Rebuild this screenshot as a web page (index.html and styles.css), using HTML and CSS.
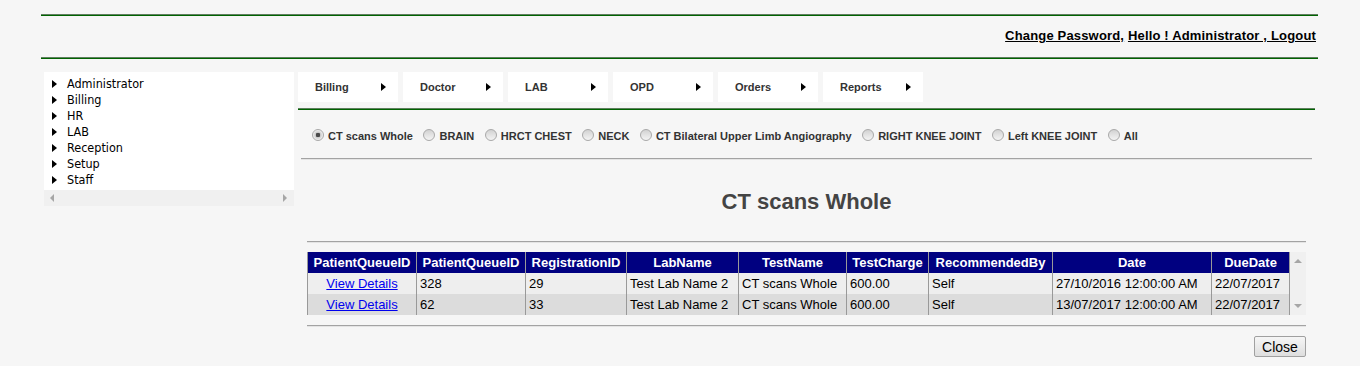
FILE: index.html
```html
<!DOCTYPE html>
<html lang="en">
<head>
  <meta charset="UTF-8" />
  <title>Lab Queue</title>
  <link rel="stylesheet" href="styles.css">
</head>
<body>
  <div class="page">
    <div class="rule green"></div>
    <div class="userbar">
      <a href="#">Change Password,</a> <a href="#">Hello ! Administrator , Logout</a>
    </div>
    <div class="rule green"></div>

    <div class="main">
      <div class="sidemenu">
        <ul class="tree">
          <li><span class="tri"></span>Administrator</li>
          <li><span class="tri"></span>Billing</li>
          <li><span class="tri"></span>HR</li>
          <li><span class="tri"></span>LAB</li>
          <li><span class="tri"></span>Reception</li>
          <li><span class="tri"></span>Setup</li>
          <li><span class="tri"></span>Staff</li>
        </ul>
        <div class="hscroll">
          <span class="arr-left"></span>
          <span class="arr-right"></span>
        </div>
      </div>

      <div class="content">
        <div class="navbar">
          <a href="#" class="tab">Billing<span class="tri"></span></a>
          <a href="#" class="tab">Doctor<span class="tri"></span></a>
          <a href="#" class="tab">LAB<span class="tri"></span></a>
          <a href="#" class="tab">OPD<span class="tri"></span></a>
          <a href="#" class="tab">Orders<span class="tri"></span></a>
          <a href="#" class="tab">Reports<span class="tri"></span></a>
        </div>
        <div class="rule green"></div>

        <div class="panel">
          <div class="radios">
            <label><span class="radio checked"></span>CT scans Whole</label>
            <label><span class="radio"></span>BRAIN</label>
            <label><span class="radio"></span>HRCT CHEST</label>
            <label><span class="radio"></span>NECK</label>
            <label><span class="radio"></span>CT Bilateral Upper Limb Angiography</label>
            <label><span class="radio"></span>RIGHT KNEE JOINT</label>
            <label><span class="radio"></span>Left KNEE JOINT</label>
            <label><span class="radio"></span>All</label>
          </div>
          <div class="rule gray"></div>

          <h2 class="title">CT scans Whole</h2>

          <div class="grid-wrap">
            <div class="rule gray"></div>
            <div class="gridbox">
              <table class="grid">
                <colgroup>
                  <col style="width:109px"><col style="width:109px"><col style="width:101px">
                  <col style="width:112px"><col style="width:108px"><col style="width:82px">
                  <col style="width:124px"><col style="width:159px"><col style="width:78px">
                </colgroup>
                <thead>
                  <tr>
                    <th>PatientQueueID</th>
                    <th>PatientQueueID</th>
                    <th>RegistrationID</th>
                    <th>LabName</th>
                    <th>TestName</th>
                    <th>TestCharge</th>
                    <th>RecommendedBy</th>
                    <th>Date</th>
                    <th>DueDate</th>
                  </tr>
                </thead>
                <tbody>
                  <tr>
                    <td class="link"><a href="#">View Details</a></td>
                    <td>328</td>
                    <td>29</td>
                    <td>Test Lab Name 2</td>
                    <td>CT scans Whole</td>
                    <td>600.00</td>
                    <td>Self</td>
                    <td>27/10/2016 12:00:00 AM</td>
                    <td>22/07/2017</td>
                  </tr>
                  <tr class="alt">
                    <td class="link"><a href="#">View Details</a></td>
                    <td>62</td>
                    <td>33</td>
                    <td>Test Lab Name 2</td>
                    <td>CT scans Whole</td>
                    <td>600.00</td>
                    <td>Self</td>
                    <td>13/07/2017 12:00:00 AM</td>
                    <td>22/07/2017</td>
                  </tr>
                </tbody>
              </table>
              <div class="vscroll">
                <span class="arr-up"></span>
                <span class="arr-down"></span>
              </div>
            </div>
            <div class="rule gray"></div>
            <div class="actions">
              <button type="button">Close</button>
            </div>
          </div>
        </div>
      </div>
    </div>
  </div>
</body>
</html>
```

FILE: styles.css
```css
body {
  margin: 0;
  background: #f6f6f6;
  font-family: 'Liberation Sans', Arial, sans-serif;
  color: #000;
}

.page {
  width: 1277px;
  margin-left: 41px;
  padding-top: 14px;
}

.rule {
  height: 0;
}

.rule.green {
  border-top: 1px solid #5f7f5f;
  border-bottom: 1px solid #006400;
}

.rule.gray {
  border-top: 1px solid #a3a3a3;
  border-bottom: 1px solid #e4e4e4;
}

.userbar {
  height: 41px;
  box-sizing: border-box;
  padding: 12px 2px 0 0;
  text-align: right;
  font-size: 13px;
  font-weight: bold;
  line-height: 15px;
  letter-spacing: 0.17px;
}

.userbar a {
  color: #000;
  text-decoration: underline;
}

.main {
  display: flex;
  align-items: flex-start;
  gap: 4px;
  margin-top: 13px;
  margin-left: 3px;
}

/* left tree menu */
.sidemenu {
  width: 250px;
}

.tree {
  list-style: none;
  margin: 0;
  padding: 4px 0 2px 8px;
  background: #fff;
  font-family: 'DejaVu Sans Condensed', 'DejaVu Sans', sans-serif;
  font-size: 12.5px;
  line-height: 16px;
}

.tree li {
  display: flex;
  align-items: center;
}

.tree .tri {
  width: 0;
  height: 0;
  border-left: 5px solid #000;
  border-top: 4px solid transparent;
  border-bottom: 4px solid transparent;
  margin-right: 10px;
}

.hscroll {
  height: 16px;
  background: #f0f0f0;
  display: flex;
  align-items: center;
  justify-content: space-between;
  padding: 0 7px 0 6px;
}

.arr-left,
.arr-right {
  width: 0;
  height: 0;
  border-top: 4px solid transparent;
  border-bottom: 4px solid transparent;
}

.arr-left {
  border-right: 4px solid #a6a6a6;
}

.arr-right {
  border-left: 4px solid #a6a6a6;
}

/* right side */
.content {
  width: 1017px;
}

.navbar {
  display: flex;
  gap: 5px;
}

.tab {
  display: flex;
  align-items: center;
  width: 100px;
  height: 30px;
  box-sizing: border-box;
  padding-left: 17px;
  background: #fff;
  color: #333;
  font-size: 11px;
  font-weight: bold;
  text-decoration: none;
}

.tab .tri {
  width: 0;
  height: 0;
  margin-left: auto;
  margin-right: 12px;
  border-left: 5px solid #000;
  border-top: 4px solid transparent;
  border-bottom: 4px solid transparent;
}

.navbar + .rule {
  margin-top: 6px;
}

.panel {
  margin: 0 3px;
}

.radios {
  display: flex;
  align-items: center;
  height: 48px;
  box-sizing: border-box;
  padding: 3px 0 0 11px;
  font-size: 11px;
  font-weight: bold;
  color: #333;
}

.radios label {
  display: flex;
  align-items: center;
  margin-right: 10.5px;
}

.radio {
  width: 10px;
  height: 10px;
  border: 1px solid #a9a9a9;
  border-radius: 50%;
  background: linear-gradient(#d2d2d2, #f4f4f4);
  margin-right: 4px;
  position: relative;
  top: -1px;
}

.radio.checked {
  background: radial-gradient(circle, #4a4a4a 0, #4a4a4a 2px, #c9c9c9 2.5px, #f2f2f2 5px);
}

.title {
  margin: 29px 0 0;
  font-size: 22px;
  line-height: 26px;
  text-align: center;
  color: #444;
}

.grid-wrap {
  margin: 26px 6px 0;
}

.gridbox {
  display: flex;
  margin-top: 9px;
}

.grid {
  border-collapse: collapse;
  table-layout: fixed;
  width: 983px;
  font-size: 13px;
}

.grid th,
.grid td {
  height: 21px;
  padding: 0 3px;
  border-left: 1px solid #999;
  border-right: 1px solid #999;
  white-space: nowrap;
  overflow: hidden;
}

.grid th {
  background: #000080;
  color: #fff;
  font-weight: bold;
  text-align: center;
}

.grid td {
  background: #eeeeee;
}

.grid tr.alt td {
  background: #dcdcdc;
}

.grid td.link {
  text-align: center;
}

.grid td.link a {
  color: #00e;
}

.vscroll {
  width: 16px;
  background: #f0f0f0;
  display: flex;
  flex-direction: column;
  justify-content: space-between;
  align-items: center;
  padding: 7px 0 7px;
  box-sizing: border-box;
}

.arr-up,
.arr-down {
  width: 0;
  height: 0;
  border-left: 4px solid transparent;
  border-right: 4px solid transparent;
}

.arr-up {
  border-bottom: 4px solid #a6a6a6;
}

.arr-down {
  border-top: 4px solid #a6a6a6;
}

.gridbox + .rule {
  margin-top: 10px;
}

.actions {
  display: flex;
  justify-content: flex-end;
  margin-top: 9px;
}

.actions button {
  width: 52px;
  height: 21px;
  padding: 0;
  font-family: 'Liberation Sans', Arial, sans-serif;
  font-size: 14px;
  color: #000;
  background: linear-gradient(#f6f6f6, #dedede);
  border: 1px solid #a0a0a0;
  border-radius: 2px;
}
```
